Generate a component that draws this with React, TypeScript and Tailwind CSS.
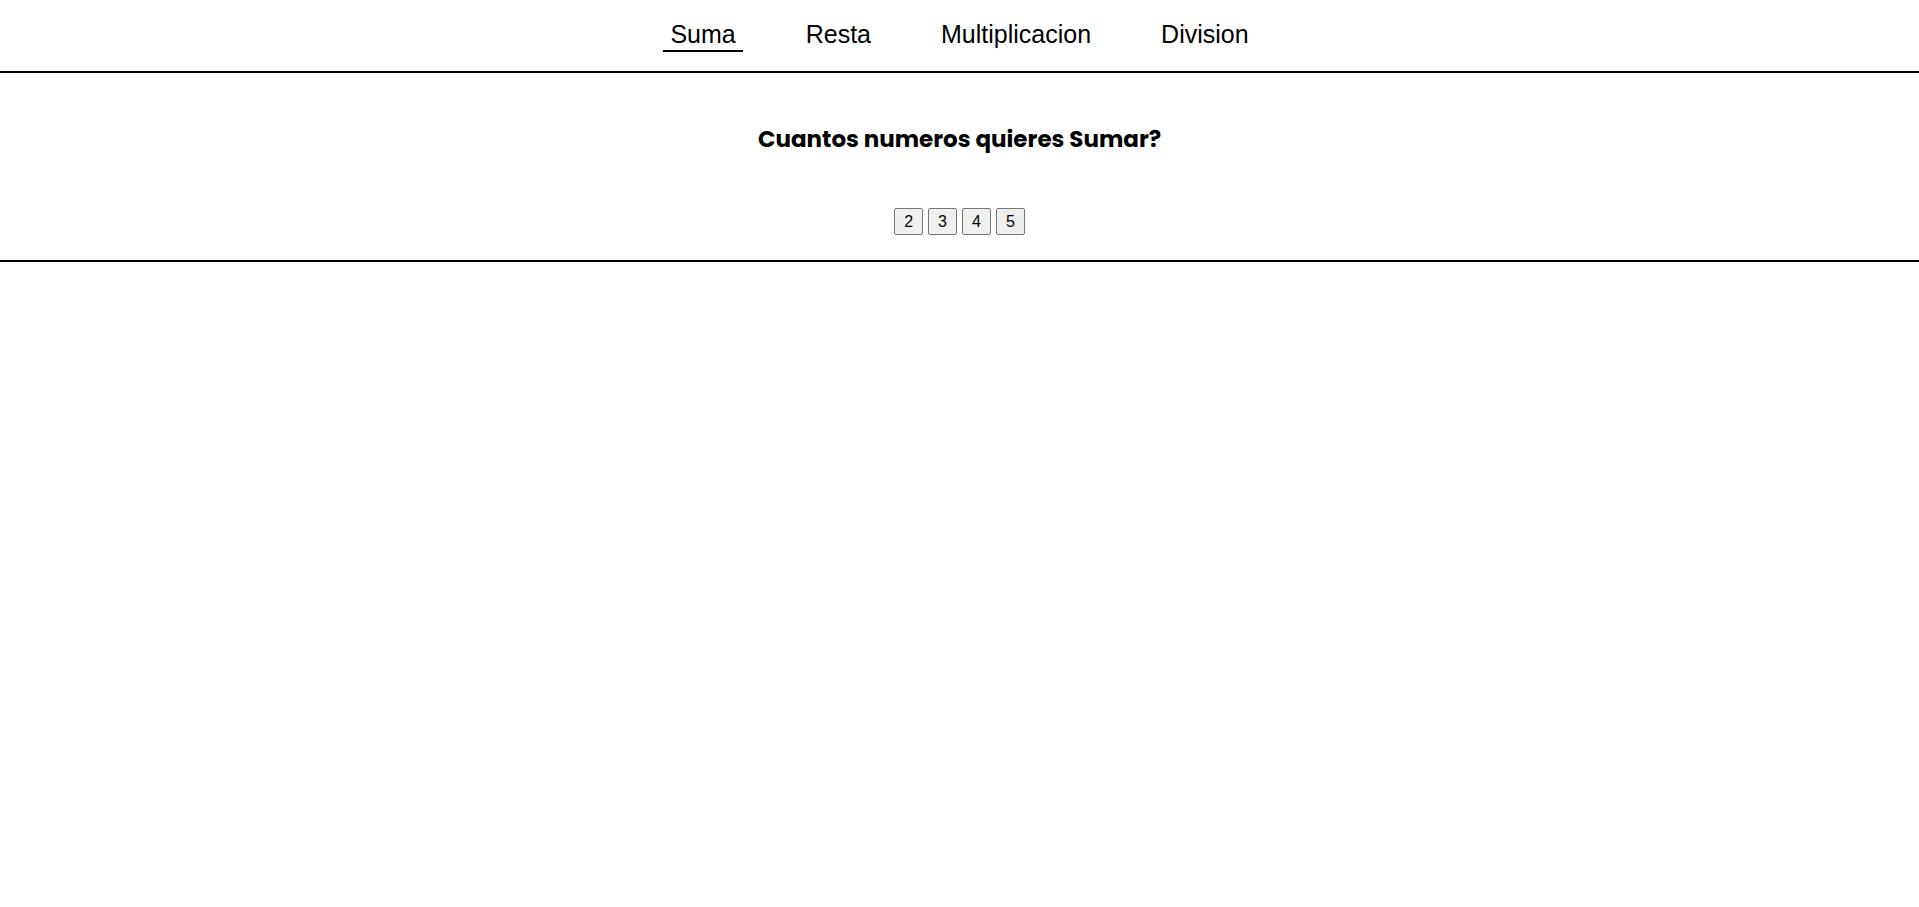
import { useState } from "react";

const operations = [
  { name: "Suma", verb: "Sumar" },
  { name: "Resta", verb: "Restar" },
  { name: "Multiplicacion", verb: "Multiplicar" },
  { name: "Division", verb: "Dividir" },
];

const amounts = [2, 3, 4, 5];

export default function App() {
  const [active, setActive] = useState(operations[0]);

  return (
    <div className="min-h-screen bg-white font-['Liberation_Sans',Arial,sans-serif] text-black">
      <header className="border-b-2 border-black pt-5 pb-[19px]">
        <nav className="flex flex-wrap justify-center gap-x-14">
          {operations.map((operation) => (
            <a
              key={operation.name}
              href={"#" + operation.name.toLowerCase()}
              onClick={() => setActive(operation)}
              className={
                "border-b-2 px-[7px] pb-0.5 text-[25px] leading-7 " +
                (operation === active ? "border-black" : "border-transparent")
              }
            >
              {operation.name}
            </a>
          ))}
        </nav>
      </header>
      <main className="flex flex-col items-center border-b-2 border-black pt-12 pb-[25px]">
        <h1 className="font-['Poppins','Inter',sans-serif] text-[23px] leading-9 font-bold">
          Cuantos numeros quieres {active.verb}?
        </h1>
        <div className="mt-[51px] flex gap-[5px]">
          {amounts.map((amount) => (
            <button
              key={amount}
              type="button"
              className="h-[27px] rounded-xs border border-[#767676] bg-[#efefef] px-[9px] text-base leading-6"
            >
              {amount}
            </button>
          ))}
        </div>
      </main>
    </div>
  );
}
